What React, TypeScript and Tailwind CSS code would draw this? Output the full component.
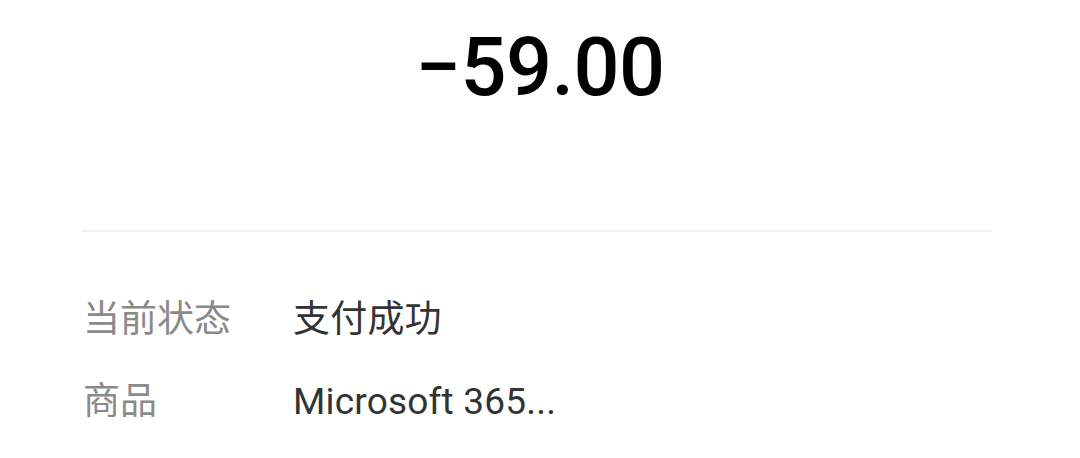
import React from 'react';

const rows = [
  { label: '当前状态', value: '支付成功' },
  { label: '商品', value: 'Microsoft 365...' },
];

export default function App() {
  return (
    <div className="w-[1080px] h-[458px] bg-white overflow-hidden font-['Roboto','Noto_Sans_CJK_SC',sans-serif]">
      <div className="h-[230px] flex justify-center">
        <div className="mt-[18px] h-[100px] text-[81px] leading-[100px] font-medium text-black tracking-[-0.5px]">
          −59.00
        </div>
      </div>
      <div className="ml-[81px] w-[911px] h-[2px] bg-[#f0f0f0]" />
      <div className="px-[83px] pt-[47px]">
        {rows.map((row) => (
          <div key={row.label} className="flex items-center h-[82px] text-[37px]">
            <div className="w-[210px] text-[#8a8a8a]">{row.label}</div>
            <div className="text-[#333333] tracking-[0.2px]">{row.value}</div>
          </div>
        ))}
      </div>
    </div>
  );
}
